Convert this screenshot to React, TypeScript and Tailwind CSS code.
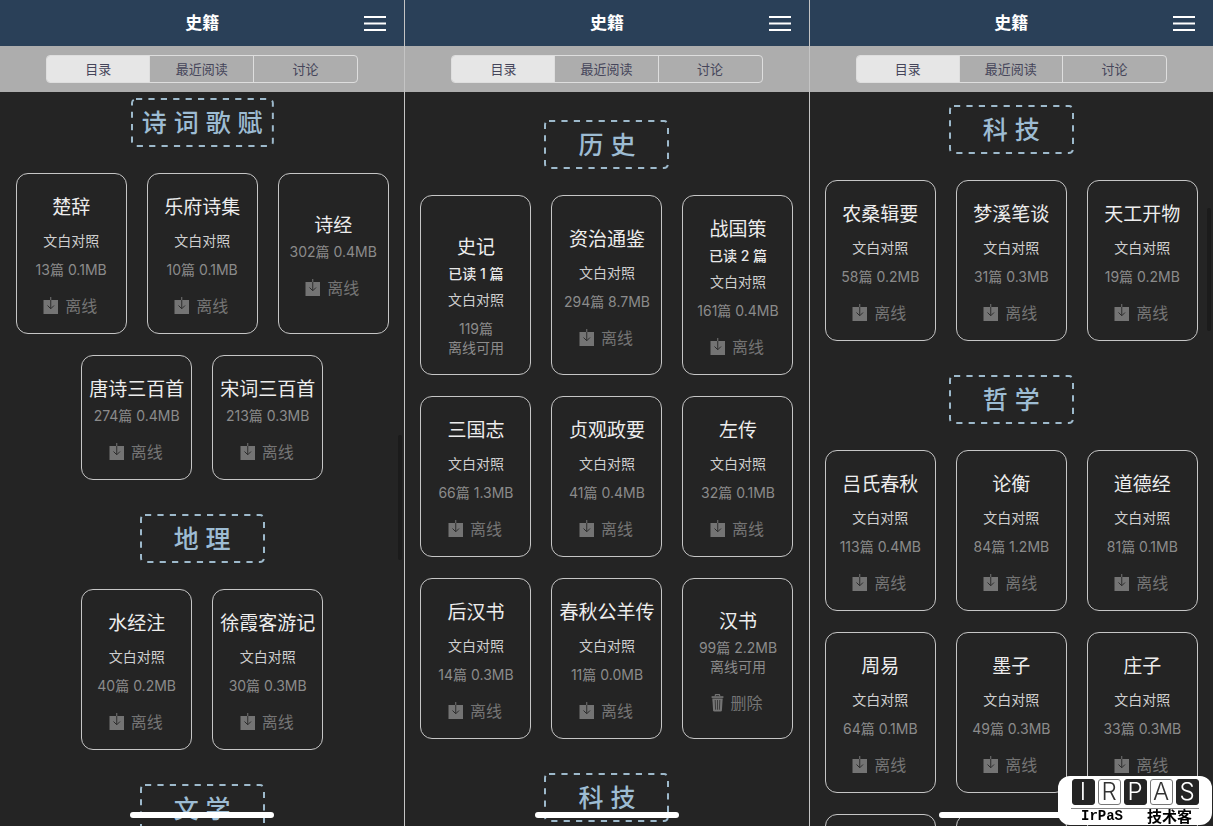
import { useState } from "react";

type Book = {
  title: string;
  read?: number;
  bilingual?: boolean;
  meta: string;
  cached?: boolean;
  action?: "download" | "remove";
};

type Section = { name: string; books: Book[] };

const bi = (title: string, meta: string, extra: Partial<Book> = {}): Book => ({
  title,
  meta,
  bilingual: true,
  action: "download",
  ...extra,
});

const poetry: Section = {
  name: "诗 词 歌 赋",
  books: [
    bi("楚辞", "13篇 0.1MB"),
    bi("乐府诗集", "10篇 0.1MB"),
    { title: "诗经", meta: "302篇 0.4MB", action: "download" },
    { title: "唐诗三百首", meta: "274篇 0.4MB", action: "download" },
    { title: "宋词三百首", meta: "213篇 0.3MB", action: "download" },
  ],
};

const geography: Section = {
  name: "地 理",
  books: [bi("水经注", "40篇 0.2MB"), bi("徐霞客游记", "30篇 0.3MB")],
};

const history: Section = {
  name: "历 史",
  books: [
    bi("史记", "119篇", { read: 1, cached: true, action: undefined }),
    bi("资治通鉴", "294篇 8.7MB"),
    bi("战国策", "161篇 0.4MB", { read: 2 }),
    bi("三国志", "66篇 1.3MB"),
    bi("贞观政要", "41篇 0.4MB"),
    bi("左传", "32篇 0.1MB"),
    bi("后汉书", "14篇 0.3MB"),
    bi("春秋公羊传", "11篇 0.0MB"),
    { title: "汉书", meta: "99篇 2.2MB", cached: true, action: "remove" },
  ],
};

const technology: Section = {
  name: "科 技",
  books: [
    bi("农桑辑要", "58篇 0.2MB"),
    bi("梦溪笔谈", "31篇 0.3MB"),
    bi("天工开物", "19篇 0.2MB"),
  ],
};

const philosophy: Section = {
  name: "哲 学",
  books: [
    bi("吕氏春秋", "113篇 0.4MB"),
    bi("论衡", "84篇 1.2MB"),
    bi("道德经", "81篇 0.1MB"),
    bi("周易", "64篇 0.1MB"),
    bi("墨子", "49篇 0.3MB"),
    bi("庄子", "33篇 0.3MB"),
  ],
};

const tabs = ["目录", "最近阅读", "讨论"];

function DownloadIcon() {
  return (
    <svg width="16" height="18" viewBox="0 0 16 18" aria-hidden="true">
      <path d="M0.5 3h14.5v14H0.5z" fill="#747474" />
      <path d="M7.75 0v3" stroke="#747474" strokeWidth="1" />
      <path d="M7.75 3v8.5M4.5 8.5l3.25 3.25L11 8.5" fill="none" stroke="#2c2c2c" strokeWidth="1" />
    </svg>
  );
}

function TrashIcon() {
  return (
    <svg width="13" height="18" viewBox="0 0 13 18" aria-hidden="true">
      <path d="M4.3 2.2V1.2q0-.6.6-.6h3.2q.6 0 .6.6v1" fill="none" stroke="#747474" strokeWidth="1.1" />
      <path d="M0.6 2.2h11.8v1.7H0.6z" fill="#747474" />
      <path d="M1.3 4.5h10.4l-.8 11.7q-.1 1.3-1.3 1.3H3.4q-1.2 0-1.3-1.3z" fill="#747474" />
      <path d="M4.2 6l.4 9.7M6.5 6v9.7M8.8 6l-.4 9.7" stroke="#2c2c2c" strokeWidth="0.8" />
    </svg>
  );
}

function BookCard({ book }: { book: Book }) {
  return (
    <article className="flex w-[111px] flex-col items-center justify-center rounded-xl border border-[#c6c6c6] pt-[18px] text-center text-[15px] leading-[19px] whitespace-nowrap">
      <h3 className="text-[19px] leading-8 text-[#ededed]">{book.title}</h3>
      {book.read && <p className="text-sm leading-[19px] font-medium text-[#e8e8e8]">已读 {book.read} 篇</p>}
      {book.bilingual && <p className="mt-[7px] mb-[10px] text-sm leading-[19px] text-[#cfcfcf]">文白对照</p>}
      <p className="text-sm leading-[19px] text-[#8b8b8b]">{book.meta}</p>
      {book.cached && <p className="text-sm leading-[19px] text-[#8b8b8b]">离线可用</p>}
      {book.action && (
        <button type="button" className="flex h-[54px] items-center gap-[6px] pr-[2px] text-base text-[#747474]">
          {book.action === "download" ? <DownloadIcon /> : <TrashIcon />}
          {book.action === "download" ? "离线" : "删除"}
        </button>
      )}
    </article>
  );
}

function DashedFrame() {
  return (
    <svg className="absolute inset-0 h-full w-full text-[#9db9cb]" aria-hidden="true">
      <rect
        className="h-[calc(100%-2px)] w-[calc(100%-2px)]"
        x="1"
        y="1"
        rx="4"
        fill="none"
        stroke="currentColor"
        strokeWidth="2"
        strokeDasharray="6.2 6.2"
      />
    </svg>
  );
}

function SectionBlock({ section }: { section: Section }) {
  return (
    <section className="mb-[34px] flex flex-col items-center">
      <h2 className="relative mb-[26px] flex h-[49px] min-w-[125px] items-center justify-center px-[11px] font-['Liberation_Sans','Noto_Sans_CJK_SC',sans-serif] text-[25px] leading-8 font-medium text-[#9dbcd3]">
        <DashedFrame />
        {section.name}
      </h2>
      <div className="flex flex-wrap justify-center gap-x-5 gap-y-[21px]">
        {section.books.map((book) => (
          <BookCard key={book.title} book={book} />
        ))}
      </div>
    </section>
  );
}

function PendingRow() {
  return (
    <div className="-mt-[13px] flex justify-center gap-5" aria-hidden="true">
      <div className="h-[161px] w-[111px] rounded-xl border border-[#c6c6c6]" />
      <div className="h-[161px] w-[111px] rounded-xl border border-[#c6c6c6]" />
      <div className="h-[161px] w-[111px] rounded-xl border border-[#c6c6c6]" />
    </div>
  );
}

function Screen({
  sections,
  offset,
  thumb,
  pending,
}: {
  sections: Section[];
  offset: string;
  thumb?: string;
  pending?: boolean;
}) {
  const [active, setActive] = useState(0);
  return (
    <div className="relative flex h-screen min-w-0 flex-col overflow-hidden border-l border-[#c4c4c4] bg-[#242424] first:border-l-0">
      <header className="grid h-[46px] shrink-0 grid-cols-[1fr_auto_1fr] items-center bg-[#2a4058] px-[18px] pt-[2px]">
        <h1 className="col-start-2 text-[17px] font-bold text-white">史籍</h1>
        <button type="button" aria-label="菜单" className="justify-self-end">
          <svg width="22" height="16" viewBox="0 0 22 16" aria-hidden="true">
            <path d="M0 1h22M0 7.5h22M0 14h22" stroke="#fff" strokeWidth="2" />
          </svg>
        </button>
      </header>
      <nav className="flex h-[46px] shrink-0 items-center bg-[#adadad] px-[46px]">
        <div className="grid h-7 w-full grid-cols-3 divide-x divide-[#dedede] overflow-hidden rounded border border-[#dedede]">
          {tabs.map((tab, i) => (
            <button
              key={tab}
              type="button"
              aria-pressed={i === active}
              onClick={() => setActive(i)}
              className={
                i === active
                  ? "bg-[#e6e6e6] pt-px text-[13px] text-[#45455a]"
                  : "pt-px text-[13px] text-[#45455a]"
              }
            >
              {tab}
            </button>
          ))}
        </div>
      </nav>
      <main className={`min-h-0 flex-1 overflow-y-auto px-2 [scrollbar-width:none] ${offset}`}>
        {sections.map((s) => (
          <SectionBlock key={s.name} section={s} />
        ))}
        {pending && <PendingRow />}
      </main>
      {thumb && <div className={`absolute right-[2px] w-1 rounded-full bg-[#1b1b1b] ${thumb}`} />}
      <div className="absolute bottom-2 left-1/2 h-[6px] w-36 -translate-x-1/2 rounded-full bg-white" />
    </div>
  );
}

const logo = [
  { letter: "I", dark: true },
  { letter: "R", dark: false },
  { letter: "P", dark: true },
  { letter: "A", dark: false },
  { letter: "S", dark: true },
];

function Watermark() {
  return (
    <div className="fixed right-px bottom-px flex h-[49px] w-[154px] flex-col items-center rounded-xl bg-white pt-[3px] text-black">
      <div className="flex gap-[3px]">
        {logo.map(({ letter, dark }) => (
          <span
            key={letter}
            className={
              dark
                ? "flex h-[26px] w-[23px] items-center justify-center rounded-[3px] border border-[#242424] bg-[#242424] text-2xl leading-none font-light text-white"
                : "flex h-[26px] w-[23px] items-center justify-center rounded-[3px] border border-[#777777] bg-white text-2xl leading-none font-light text-[#333333]"
            }
          >
            {letter}
          </span>
        ))}
      </div>
      <div className="mt-[3px] flex h-[15px] w-[128px] items-center justify-between border-t border-[#888888] pr-[7px] pl-[10px] font-bold">
        <span className="font-['Liberation_Mono',monospace] text-sm leading-none">IrPaS</span>
        <span className="text-[15px] leading-none">技术客</span>
      </div>
    </div>
  );
}

export default function App() {
  return (
    <div className="bg-[#242424] font-['Inter','Noto_Sans_CJK_SC',sans-serif]">
      <div className="grid grid-cols-3">
        <Screen
          sections={[poetry, geography, { name: "文 学", books: [] }]}
          offset="pt-[6px]"
          thumb="top-[435px] h-[125px]"
        />
        <Screen sections={[history, { name: technology.name, books: [] }]} offset="pt-[28px]" />
        <Screen sections={[technology, philosophy]} offset="pt-[13px]" thumb="top-[208px] h-[123px]" pending />
      </div>
      <Watermark />
    </div>
  );
}
